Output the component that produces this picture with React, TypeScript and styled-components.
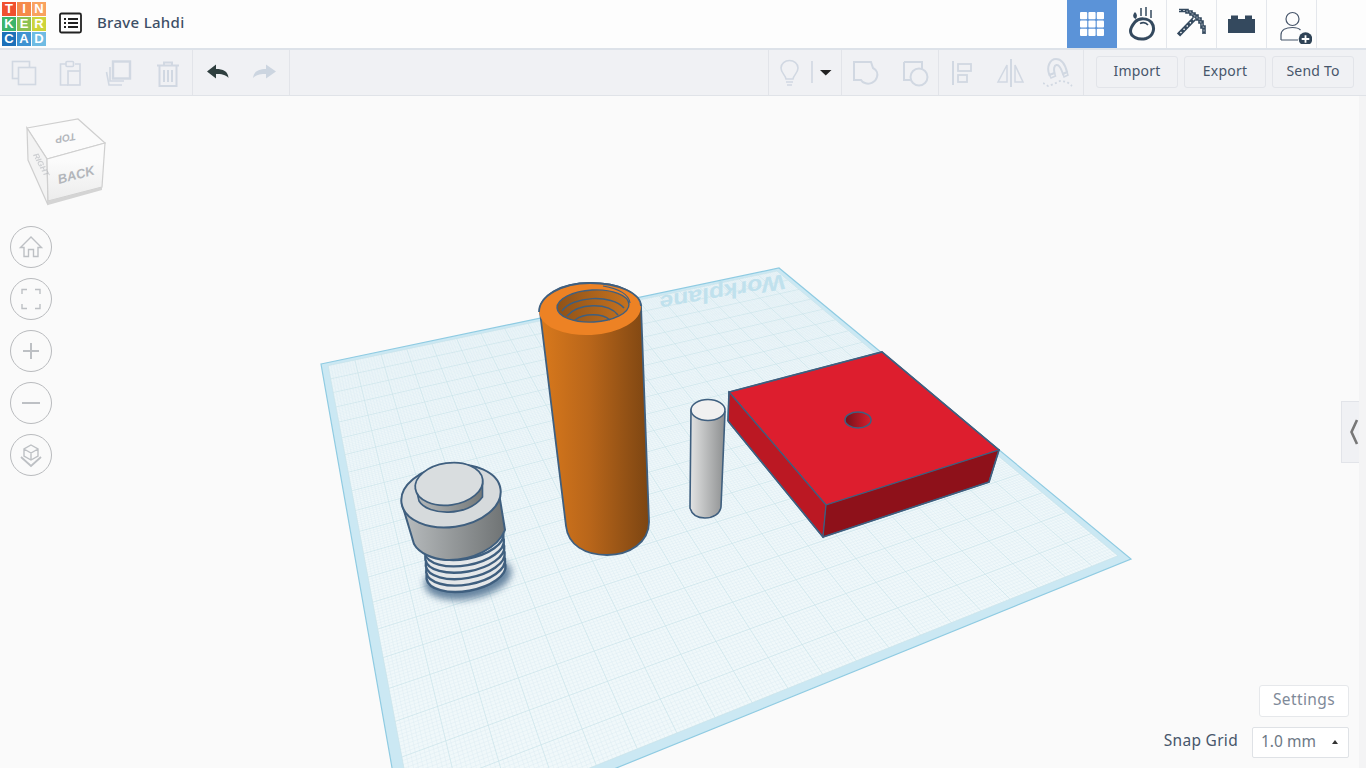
import React from "react";
import styled, { createGlobalStyle } from "styled-components";

const GlobalStyle = createGlobalStyle`
  html, body {
    margin: 0;
    padding: 0;
    height: 100%;
    overflow: hidden;
    background: #fafafa;
    font-family: "Noto Sans", "Open Sans", sans-serif;
  }
  #root { height: 100%; }
`;

const Page = styled.div`
  width: 1366px;
  height: 768px;
  display: flex;
  flex-direction: column;
  overflow: hidden;
`;

const TopBar = styled.header`
  height: 48px;
  flex: none;
  display: flex;
  align-items: center;
  background: #fdfdfd;
  border-bottom: 2px solid #dde2e9;
`;

const Logo = styled.div`
  display: grid;
  grid-template-columns: repeat(3, 14px);
  grid-template-rows: repeat(3, 14px);
  gap: 1px;
  margin-left: 2px;
`;

const LogoCell = styled.span<{ $bg: string }>`
  background: ${(p) => p.$bg};
  color: #fff;
  font-family: "Liberation Sans", sans-serif;
  font-size: 13px;
  font-weight: 700;
  line-height: 14px;
  text-align: center;
`;

const ListButton = styled.div`
  margin-left: 13px;
  margin-bottom: 3px;
  width: 24px;
  height: 22px;
  display: flex;
`;

const ProjectName = styled.div`
  margin-left: 14px;
  margin-bottom: 5px;
  font-size: 15px;
  font-weight: 500;
  color: #3d4f66;
  letter-spacing: 0.3px;
`;

const Spacer = styled.div`
  flex: 1;
`;

const TabRow = styled.nav`
  display: flex;
  height: 48px;
  margin-right: 49px;
`;

const Tab = styled.div<{ $active?: boolean }>`
  width: 49px;
  height: 48px;
  display: flex;
  align-items: center;
  justify-content: center;
  background: ${(p) => (p.$active ? "#5b93d8" : "transparent")};
  border-right: 1px solid ${(p) => (p.$active ? "#5b93d8" : "#e4e7ec")};
`;

const ToolBar = styled.div`
  height: 45px;
  flex: none;
  display: flex;
  align-items: stretch;
  background: #f0f1f4;
  border-bottom: 1px solid #e0e3e8;
`;

const ToolGroup = styled.div<{ $w: number; $lead?: boolean }>`
  width: ${(p) => p.$w}px;
  box-sizing: border-box;
  flex: none;
  display: flex;
  align-items: center;
  border-right: 1px solid #e2e4e9;
  border-left: ${(p) => (p.$lead ? "1px solid #e2e4e9" : "none")};
`;

const ToolIcon = styled.svg<{ $left: number }>`
  width: 30px;
  height: 30px;
  margin-left: ${(p) => p.$left}px;
  flex: none;
  fill: none;
  stroke: #d1d8e2;
  stroke-width: 1.6;
`;

const ActionRow = styled.div`
  display: flex;
  align-items: center;
  gap: 6px;
  margin-left: 12px;
  margin-right: 12px;
  padding-bottom: 2px;
`;

const ActionButton = styled.button`
  width: 82px;
  height: 32px;
  padding: 0 0 2px;
  border: 1px solid #e2e4e9;
  border-radius: 3px;
  background: #f0f1f4;
  color: #47566b;
  font-family: inherit;
  font-size: 14px;
  line-height: 26px;
  letter-spacing: 0.2px;
`;

const Viewport = styled.main`
  flex: 1;
  position: relative;
  background: #fafafa;
  overflow: hidden;
`;

const Scene = styled.svg`
  position: absolute;
  left: 0;
  top: -96px;
  width: 1366px;
  height: 768px;
`;

const RightStrip = styled.div`
  position: absolute;
  right: 0;
  top: 0;
  bottom: 0;
  width: 7px;
  background: #f4f4f5;
`;

const CollapseTab = styled.div`
  position: absolute;
  right: 7px;
  top: 305px;
  width: 18px;
  height: 62px;
  box-sizing: border-box;
  padding-left: 5px;
  display: flex;
  align-items: center;
  justify-content: center;
  background: #f0f1f4;
  border: 1px solid #e2e4e9;
  border-right: none;
`;

const ViewCube = styled.svg`
  position: absolute;
  left: 22px;
  top: 20px;
  width: 86px;
  height: 92px;
`;

const CubeLabel = styled.text`
  fill: #b3b6bb;
  font-family: "Liberation Sans", sans-serif;
  font-weight: 700;
  font-style: italic;
`;

const ViewColumn = styled.div`
  position: absolute;
  left: 10px;
  top: 130px;
  display: flex;
  flex-direction: column;
  gap: 10px;
`;

const RoundButton = styled.div`
  width: 40px;
  height: 40px;
  border-radius: 50%;
  border: 1px solid #b9bbbe;
  background: #fafafa;
  display: flex;
  align-items: center;
  justify-content: center;
`;

const RoundIcon = styled.svg`
  width: 26px;
  height: 26px;
  fill: none;
  stroke: #bdc0c4;
  stroke-width: 1.4;
`;

const GridControls = styled.div`
  position: absolute;
  right: 17px;
  bottom: 10px;
  display: flex;
  flex-direction: column;
  align-items: flex-end;
  gap: 10px;
`;

const SettingsButton = styled.div`
  width: 90px;
  height: 32px;
  box-sizing: border-box;
  border: 1px solid #e6e8eb;
  border-radius: 3px;
  background: #fff;
  color: #7f8a99;
  font-size: 15.5px;
  letter-spacing: 0.4px;
  line-height: 27px;
  text-align: center;
`;

const SnapRow = styled.div`
  display: flex;
  align-items: center;
  gap: 14px;
`;

const SnapLabel = styled.div`
  color: #47566b;
  font-size: 15.5px;
  letter-spacing: 0.3px;
  margin-bottom: 5px;
`;

const SnapSelect = styled.div`
  width: 97px;
  height: 31px;
  box-sizing: border-box;
  border: 1px solid #dfe2e6;
  border-radius: 2px;
  background: #fff;
  color: #6d7885;
  font-size: 15.5px;
  line-height: 27px;
  padding-left: 8px;
  position: relative;
`;

const SelectCaret = styled.span`
  position: absolute;
  right: 10px;
  top: 12px;
  border-left: 3.5px solid transparent;
  border-right: 3.5px solid transparent;
  border-bottom: 4px solid #333;
`;

// workplane projection: maps (u,v) in 0..1 to the four screen corners
const corners = [
  [321, 364],
  [779, 268],
  [1131, 559],
  [407, 853],
];

function homography() {
  const [[x0, y0], [x1, y1], [x2, y2], [x3, y3]] = corners;
  const dx1 = x1 - x2;
  const dx2 = x3 - x2;
  const sx = x0 - x1 + x2 - x3;
  const dy1 = y1 - y2;
  const dy2 = y3 - y2;
  const sy = y0 - y1 + y2 - y3;
  const det = dx1 * dy2 - dx2 * dy1;
  const g = (sx * dy2 - dx2 * sy) / det;
  const h = (dx1 * sy - sx * dy1) / det;
  const a = x1 - x0 + g * x1;
  const b = x3 - x0 + h * x3;
  const d = y1 - y0 + g * y1;
  const e = y3 - y0 + h * y3;
  return (u: number, v: number) => {
    const w = g * u + h * v + 1;
    return [(a * u + b * v + x0) / w, (d * u + e * v + y0) / w];
  };
}

const project = homography();

const inset = 0.012;
const toInner = (t: number) => inset + t * (1 - inset * 2);

function gridPath(step: number, skip: number) {
  let d = "";
  for (let i = 0; i <= 200; i += step) {
    if (skip && i % skip === 0) continue;
    const t = toInner(i / 200);
    const a = project(t, toInner(0));
    const b = project(t, toInner(1));
    const c = project(toInner(0), t);
    const e = project(toInner(1), t);
    d += `M${a[0].toFixed(1)} ${a[1].toFixed(1)}L${b[0].toFixed(1)} ${b[1].toFixed(1)}`;
    d += `M${c[0].toFixed(1)} ${c[1].toFixed(1)}L${e[0].toFixed(1)} ${e[1].toFixed(1)}`;
  }
  return d;
}

const quad = (pts: number[][]) => pts.map((p) => p.join(",")).join(" ");

const innerQuad = [
  project(toInner(0), toInner(0)),
  project(toInner(1), toInner(0)),
  project(toInner(1), toInner(1)),
  project(toInner(0), toInner(1)),
];

const outline = "#3f5f7f";

function ThreadRings() {
  // upper rings sit on top of lower ones, so only crescents stay visible
  const rings = [0, 1, 2, 3, 4, 5];
  return (
    <g>
      {rings.map((i) => {
        const cx = 466 - i * 0.4;
        const cy = 572 - i * 6.4;
        return (
          <ellipse
            key={i}
            cx={cx}
            cy={cy}
            rx={40}
            ry={19}
            transform={`rotate(-10 ${cx} ${cy})`}
            fill="#e4e7e9"
            stroke={outline}
            strokeWidth="2.4"
          />
        );
      })}
    </g>
  );
}

function WorkScene() {
  return (
    <Scene viewBox="0 0 1366 768">
      <defs>
        <linearGradient id="orange" x1="0" x2="1" y1="0" y2="0">
          <stop offset="0" stopColor="#d9791c" />
          <stop offset="0.45" stopColor="#b9661a" />
          <stop offset="1" stopColor="#7c4512" />
        </linearGradient>
        <linearGradient id="steel" x1="0" x2="1" y1="0" y2="0">
          <stop offset="0" stopColor="#b9bdbf" />
          <stop offset="1" stopColor="#6f7374" />
        </linearGradient>
        <linearGradient id="steelTop" x1="0" x2="1" y1="0" y2="0">
          <stop offset="0" stopColor="#b5b9bb" />
          <stop offset="1" stopColor="#757979" />
        </linearGradient>
        <linearGradient id="peg" x1="0" x2="1" y1="0" y2="0">
          <stop offset="0" stopColor="#e2e3e3" />
          <stop offset="1" stopColor="#8d8f90" />
        </linearGradient>
        <linearGradient id="hole" x1="0" x2="1" y1="0" y2="0">
          <stop offset="0" stopColor="#74101a" />
          <stop offset="1" stopColor="#d81e2c" />
        </linearGradient>
        <linearGradient id="bore" x1="0" x2="1" y1="0" y2="0">
          <stop offset="0" stopColor="#8f5218" />
          <stop offset="1" stopColor="#c5721f" />
        </linearGradient>
        <filter id="blur" x="-30%" y="-30%" width="160%" height="160%">
          <feGaussianBlur stdDeviation="3.5" />
        </filter>
      </defs>

      {/* workplane */}
      <polygon points={quad(corners)} fill="#cbe8f3" stroke="#8fcbe2" strokeWidth="1.2" />
      <polygon points={quad(innerQuad)} fill="#f0f8fa" />
      <path d={gridPath(1, 10)} stroke="#d6e9f0" strokeWidth="0.35" fill="none" />
      <path d={gridPath(10, 0)} stroke="#c9e2ea" strokeWidth="0.7" fill="none" />
      <text
        x="0"
        y="0"
        transform="translate(785 274) rotate(170) skewX(-10) scale(1 0.85)"
        fill="#c0e1ed"
        fontFamily="'Liberation Sans', sans-serif"
        fontWeight="700"
        fontSize="25"
      >
        Workplane
      </text>

      {/* orange tube */}
      <path
        d="M540 312 L566 526 C568 545 585 555 607 555 C630 555 649 542 649 522 L641 306 C638 292 618 283 590 283 C560 283 539 296 540 312 Z"
        fill="url(#orange)"
        stroke={outline}
        strokeWidth="1.8"
      />
      <ellipse cx="590" cy="309" rx="51" ry="26" transform="rotate(-3 590 309)" fill="#ed8224" />
      <path d="M539 312 C539 296 562 283 590 283 C620 283 641 294 641 306" fill="none" stroke={outline} strokeWidth="1.8" />
      <ellipse cx="593" cy="306" rx="36" ry="16" transform="rotate(-3 593 306)" fill="url(#bore)" stroke={outline} strokeWidth="1.4" />
      <path
        d="M562 311 C572 296 612 294 624 308 M567 316 C578 303 608 302 618 315 M575 320 C584 313 602 313 610 320"
        fill="none"
        stroke={outline}
        strokeWidth="1.5"
      />
      <path d="M603 286 C620 289 629 295 630 303" fill="none" stroke={outline} strokeWidth="1.2" />

      {/* peg */}
      <path
        d="M691 410 L690 508 C692 515 698 518 705 518 C713 518 720 514 721 507 L725 412 Z"
        fill="url(#peg)"
        stroke={outline}
        strokeWidth="1.6"
      />
      <ellipse cx="708" cy="410" rx="17" ry="10.5" fill="#f0f0f0" stroke={outline} strokeWidth="1.6" />

      {/* red block */}
      <polygon points="729,392 882,352 999,450 826,505" fill="#dd1e2e" stroke={outline} strokeWidth="1.2" />
      <polygon points="729,392 826,505 823,537 728,421" fill="#bb1823" stroke={outline} strokeWidth="1.2" />
      <polygon points="826,505 999,450 989,482 823,537" fill="#8e111a" stroke={outline} strokeWidth="1.2" />
      <polyline points="728,421 823,537 989,482 999,450 882,352 729,392 728,421" fill="none" stroke={outline} strokeWidth="1.6" />
      <ellipse cx="858" cy="420" rx="13" ry="8" fill="url(#hole)" stroke={outline} strokeWidth="1.6" />

      {/* threaded plug */}
      <ellipse cx="468" cy="578" rx="44" ry="21" transform="rotate(-10 468 578)" fill="#4f7191" opacity="0.85" filter="url(#blur)" />
      <ThreadRings />
      <path
        d="M402 504 L414 544 C419 553 432 559 446 560 C472 561 498 548 505 530 L498 487 Z"
        fill="url(#steel)"
        stroke={outline}
        strokeWidth="2"
      />
      <ellipse cx="451" cy="496" rx="50" ry="31" transform="rotate(-8 451 496)" fill="#d6dadc" stroke={outline} strokeWidth="2" />
      <path d="M415.500 486 L419 501 C428 516 468 517 482.500 497 L482.500 481 Z" fill="url(#steelTop)" stroke={outline} strokeWidth="1.6" />
      <ellipse cx="449" cy="484" rx="34" ry="21" transform="rotate(-8 449 484)" fill="#d9dddf" stroke={outline} strokeWidth="1.8" />
    </Scene>
  );
}

const logoCells = [
  ["T", "#f0502f"],
  ["I", "#f58a4b"],
  ["N", "#f9a25f"],
  ["K", "#3cb46c"],
  ["E", "#8cc152"],
  ["R", "#cdd43a"],
  ["C", "#1b70b9"],
  ["A", "#3f93d1"],
  ["D", "#6fbbe3"],
];

const pickHead = "M3 2.500H11V4H15V6H18V8H21V11H24V14H26V19H28V26";

function App() {
  return (
    <>
      <GlobalStyle />
      <Page>
        <TopBar>
          <Logo>
            {logoCells.map(([t, c]) => (
              <LogoCell key={t} $bg={c}>
                {t}
              </LogoCell>
            ))}
          </Logo>
          <ListButton>
            <svg width="24" height="22" viewBox="0 0 24 22">
              <rect x="1" y="1.500" width="21" height="19" rx="1.500" fill="#fff" stroke="#222" strokeWidth="1.800" />
              <path d="M5 7h2M9 7h10M5 11h2M9 11h10M5 15h2M9 15h10" stroke="#222" strokeWidth="2" />
            </svg>
          </ListButton>
          <ProjectName>Brave Lahdi</ProjectName>
          <Spacer />
          <TabRow>
            <Tab $active>
              <svg width="26" height="26" viewBox="0 0 26 26" fill="#fff">
                {[0, 1, 2].flatMap((r) =>
                  [0, 1, 2].map((c) => <rect key={`${r}${c}`} x={1 + c * 8.4} y={1 + r * 8.4} width="7.2" height="7.2" rx="1" />)
                )}
              </svg>
            </Tab>
            <Tab>
              <svg width="28" height="34" viewBox="0 0 28 34" fill="none" stroke="#34495e" strokeWidth="3">
                <path d="M7 15 C11 10.500 20 11 23.500 15.500 C27.500 21 25.500 29 18 31.500 C10 33.500 2.500 29.500 2.500 24 C2.500 20.500 4.500 18 7 15 Z" />
                <path d="M12 16.500 C15 15 18 15.500 20 18" strokeWidth="1.600" />
                <path d="M7.500 12 C4.500 10.500 4.500 7.500 7 5 C9.500 7.500 9.500 10 7.500 12 Z" fill="#34495e" stroke="none" />
                <path d="M13 1v8M18 0v9M23 3v8" strokeWidth="1.500" />
              </svg>
            </Tab>
            <Tab>
              <svg width="31" height="32" viewBox="0 0 31 32" fill="none">
                <path d={pickHead} stroke="#34495e" strokeWidth="3.600" />
                <path d={pickHead} stroke="#aeb8c3" strokeWidth="1" strokeDasharray="2 2" />
                <path d="M18 11 L2.500 27" stroke="#34495e" strokeWidth="4.500" />
                <path d="M18 11 L2.500 27" stroke="#fff" strokeWidth="1.300" strokeDasharray="1.500 3" />
              </svg>
            </Tab>
            <Tab>
              <svg width="27" height="20" viewBox="0 0 27 20" fill="#34495e">
                <path d="M0 5h3V1.500h7V5h7V1.500h7V5h3v14H0z" />
              </svg>
            </Tab>
            <Tab>
              <svg width="40" height="40" viewBox="0 0 40 40" fill="none">
                <circle cx="20.500" cy="15" r="6.500" stroke="#47566b" strokeWidth="1.200" />
                <path d="M9 36 V31 C9 26 14 23.500 20.500 23.500 C24 23.500 27 24.500 28.500 26 M9 36 H26" stroke="#47566b" strokeWidth="1.200" />
                <circle cx="33.500" cy="35" r="6.800" fill="#2f4356" />
                <path d="M29.700 35h7.600M33.500 31.200v7.600" stroke="#fff" strokeWidth="1.800" />
              </svg>
            </Tab>
          </TabRow>
        </TopBar>

        <ToolBar>
          <ToolGroup $w={193}>
            <ToolIcon $left={9} viewBox="0 0 30 30">
              <rect x="3.500" y="3.500" width="17" height="17" />
              <rect x="9.500" y="9.500" width="17" height="17" fill="#f0f1f4" />
            </ToolIcon>
            <ToolIcon $left={17} viewBox="0 0 30 30">
              <path d="M10 6H4.500v21H12M19 6h5v7" />
              <rect x="10" y="3.500" width="7.500" height="5" rx="1" />
              <rect x="12" y="13" width="12" height="14" />
            </ToolIcon>
            <ToolIcon $left={17} viewBox="0 0 30 30">
              <rect x="10" y="3.500" width="17" height="17" strokeWidth="2.400" />
              <path d="M7 9v14h14M3.500 14l2.500 13 13 0" />
            </ToolIcon>
            <ToolIcon $left={20} viewBox="0 0 30 30">
              <path d="M4 7.500h22M11 7V4.500h8V7M6.500 8v20h17V8M11 12v12M15 12v12M19 12v12" strokeWidth="2" />
            </ToolIcon>
          </ToolGroup>
          <ToolGroup $w={97}>
            <ToolIcon $left={10} viewBox="0 0 30 30">
              <path d="M4 13.500 L13 6.500 V11 C20 11 25 13 25.500 20 C23 16.500 18 16 13 16 V20.500 Z" fill="#2f3f3f" stroke="none" />
            </ToolIcon>
            <ToolIcon $left={16} viewBox="0 0 30 30">
              <path d="M27 13.500 L17 6.500 V11 C10 11 5 13 4 20 C7 16.500 12 16 17 16 V20.500 Z" fill="#ccd5e0" stroke="none" />
            </ToolIcon>
          </ToolGroup>
          <Spacer />
          <ToolGroup $w={74} $lead>
            <ToolIcon $left={6} viewBox="0 0 30 30">
              <path d="M11 21 C10.500 17 6 15 6 10 C6 5.500 10 2.500 14.500 2.500 C19 2.500 23 5.500 23 10 C23 15 18.500 17 18 21 Z" />
              <path d="M11 24h7M12 27h5" />
            </ToolIcon>
            <ToolIcon $left={6} viewBox="0 0 30 30">
              <path d="M1 3v22" />
              <path d="M9 12h11.500l-5.750 5.500z" fill="#222" stroke="none" />
            </ToolIcon>
          </ToolGroup>
          <ToolGroup $w={97}>
            <ToolIcon $left={9} viewBox="0 0 30 30">
              <path d="M3 4h17l2 6c4 2 5 6 4 9-1.500 5-7 8-12 6-2-.7-3.500-2-4-3H3z" strokeWidth="2" />
            </ToolIcon>
            <ToolIcon $left={20} viewBox="0 0 30 30">
              <path d="M3 4h18v8M3 4v18h8" strokeWidth="2" />
              <circle cx="18" cy="19" r="8.500" strokeWidth="2" />
            </ToolIcon>
          </ToolGroup>
          <ToolGroup $w={145}>
            <ToolIcon $left={10} viewBox="0 0 30 30">
              <path d="M4 3v24" strokeWidth="2" />
              <rect x="9" y="6" width="13" height="7" strokeWidth="1.800" />
              <rect x="9" y="17" width="9" height="7" strokeWidth="1.800" />
            </ToolIcon>
            <ToolIcon $left={17} viewBox="0 0 30 30">
              <path d="M15 1v28" strokeWidth="2" />
              <path d="M11 7 2 24h9zM19 7l8 17h-8z" strokeWidth="1.500" />
            </ToolIcon>
            <ToolIcon $left={17} viewBox="0 0 30 30">
              <path d="M6.500 17 C3 9 7 1 13 1 C19 1 22 6 24 14 L20 16 C18 10 16 6.500 13.500 7 C11 7.500 10.500 11 11.500 15 Z" strokeWidth="2" />
              <path d="M6.500 17l5-2 1 3-4.500 2zM20 16l4-2 1 3-4 2z" strokeWidth="1.500" />
              <path d="M0 25l5 3 6-2 6-3 7 1 5 4" strokeWidth="1.800" strokeDasharray="2 2.400" />
            </ToolIcon>
          </ToolGroup>
          <ActionRow>
            <ActionButton>Import</ActionButton>
            <ActionButton>Export</ActionButton>
            <ActionButton>Send To</ActionButton>
          </ActionRow>
        </ToolBar>

        <Viewport>
          <WorkScene />
          <RightStrip />
          <CollapseTab>
            <svg width="11" height="26" viewBox="0 0 11 26">
              <path d="M9 1 L3.500 13 L9 25" fill="none" stroke="#777" strokeWidth="2.600" />
            </svg>
          </CollapseTab>

          <ViewCube viewBox="0 0 86 92">
            <defs>
              <linearGradient id="cubeFront" x1="0" x2="0" y1="0" y2="1">
                <stop offset="0.3" stopColor="#fbfbfb" />
                <stop offset="1" stopColor="#ececec" />
              </linearGradient>
            </defs>
            <polygon points="5,12 56,3 83,27 25,43" fill="#fbfbfb" stroke="#cfcfcf" strokeWidth="1.200" />
            <polygon points="5,12 25,43 26,89 6,44" fill="#f3f3f3" stroke="#cfcfcf" strokeWidth="1.200" />
            <polygon points="25,43 83,27 80,71 26,85" fill="url(#cubeFront)" stroke="#cfcfcf" strokeWidth="1.200" />
            <polygon points="26,85 80,71 80,74 26,89" fill="#d4d4d4" />
            <CubeLabel transform="translate(53 17) rotate(170)" fontSize="10">
              TOP
            </CubeLabel>
            <CubeLabel transform="translate(37 68) rotate(-15)" fontSize="13">
              BACK
            </CubeLabel>
            <CubeLabel transform="translate(11 39) rotate(62)" fontSize="8" opacity="0.6">
              RIGHT
            </CubeLabel>
          </ViewCube>

          <ViewColumn>
            <RoundButton>
              <RoundIcon viewBox="0 0 26 26">
                <path d="M2.500 13.500 L13 3 L23.500 13.500 L20 13.500 V22.500 H15.500 V15.500 H10.500 V22.500 H6 V13.500 Z" />
              </RoundIcon>
            </RoundButton>
            <RoundButton>
              <RoundIcon viewBox="0 0 26 26">
                <path d="M4 8V3.500H9M17 3.500H22V8M22 18V22.500H17M9 22.500H4V18" />
              </RoundIcon>
            </RoundButton>
            <RoundButton>
              <RoundIcon viewBox="0 0 26 26">
                <path d="M13 5v16M5 13h16" strokeWidth="2" />
              </RoundIcon>
            </RoundButton>
            <RoundButton>
              <RoundIcon viewBox="0 0 26 26">
                <path d="M4 13h18" strokeWidth="2" />
              </RoundIcon>
            </RoundButton>
            <RoundButton>
              <RoundIcon viewBox="0 0 26 26">
                <path d="M13 3 L20 7 V14 L13 18 L6 14 V7 Z M6 7 L13 11 L20 7 M13 11 V18" />
                <path d="M3 15 L13 24 L23 15" strokeWidth="1.800" />
              </RoundIcon>
            </RoundButton>
          </ViewColumn>

          <GridControls>
            <SettingsButton>Settings</SettingsButton>
            <SnapRow>
              <SnapLabel>Snap Grid</SnapLabel>
              <SnapSelect>
                1.0 mm
                <SelectCaret />
              </SnapSelect>
            </SnapRow>
          </GridControls>
        </Viewport>
      </Page>
    </>
  );
}

export default App;
